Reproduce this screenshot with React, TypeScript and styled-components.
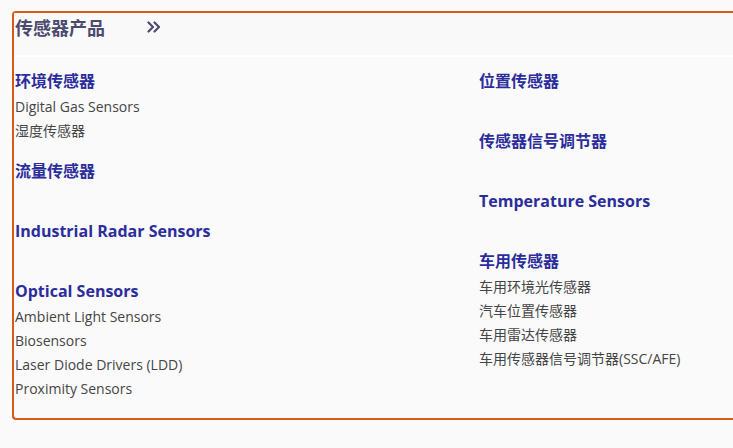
import React from "react";
import styled, { createGlobalStyle } from "styled-components";

const Global = createGlobalStyle`
  html, body { margin: 0; padding: 0; background: #fafafa; overflow: hidden; }
  body { font-family: "Open Sans", "Noto Sans CJK SC", sans-serif; }
  ul { margin: 0; padding: 0; list-style: none; }
`;

const Page = styled.div`
  padding: 11px 0 0 12px;
  width: 733px;
  box-sizing: border-box;
`;

const Panel = styled.section`
  border: 2px solid #d9581f;
  border-right: none;
  border-radius: 4px 0 0 4px;
  background: #fafafa;
`;

const Header = styled.header`
  display: flex;
  align-items: center;
  height: 44px;
  padding: 0 0 14px 1px;
  box-sizing: border-box;
  background: #f9f9f9;
  border-bottom: 2px solid #ffffff;
`;

const HeaderTitle = styled.h2`
  margin: 0;
  font-family: "Noto Sans CJK SC", sans-serif;
  font-size: 18px;
  font-weight: 700;
  line-height: 30px;
  color: #4c4a6e;
`;

const Chevron = styled.span`
  display: inline-flex;
  margin-left: 42px;
  color: #4c4a6e;
`;

const Columns = styled.div`
  display: grid;
  grid-template-columns: 464px 1fr;
  padding: 10px 0 3px 1px;
`;

const Column = styled.div`
  display: flex;
  flex-direction: column;
`;

const Group = styled.div`
  margin-bottom: 14px;
`;

const GroupTitle = styled.a`
  display: block;
  font-size: 16px;
  font-weight: 700;
  line-height: 28px;
  color: #2c2d9c;
  text-decoration: none;
  white-space: nowrap;
`;

const SubList = styled.ul`
  min-height: 18px;
`;

const SubItem = styled.li`
  font-size: 14px;
  line-height: 24px;
  color: #454545;
  white-space: nowrap;
`;

type G = { title: string; items: string[] };

const left: G[] = [
  { title: "环境传感器", items: ["Digital Gas Sensors", "湿度传感器"] },
  { title: "流量传感器", items: [] },
  { title: "Industrial Radar Sensors", items: [] },
  {
    title: "Optical Sensors",
    items: ["Ambient Light Sensors", "Biosensors", "Laser Diode Drivers (LDD)", "Proximity Sensors"],
  },
];

const right: G[] = [
  { title: "位置传感器", items: [] },
  { title: "传感器信号调节器", items: [] },
  { title: "Temperature Sensors", items: [] },
  {
    title: "车用传感器",
    items: ["车用环境光传感器", "汽车位置传感器", "车用雷达传感器", "车用传感器信号调节器(SSC/AFE)"],
  },
];

const ChevronsIcon = () => (
  <svg width="14" height="12" viewBox="0 0 14 12" fill="none" stroke="currentColor" strokeWidth="2.2" strokeLinecap="round" strokeLinejoin="round">
    <polyline points="1.5,1.5 6,6 1.5,10.5" />
    <polyline points="7.5,1.5 12,6 7.5,10.5" />
  </svg>
);

const renderCol = (groups: G[]) => (
  <Column>
    {groups.map((g) => (
      <Group key={g.title}>
        <GroupTitle href="#">{g.title}</GroupTitle>
        <SubList>
          {g.items.map((i) => (
            <SubItem key={i}>{i}</SubItem>
          ))}
        </SubList>
      </Group>
    ))}
  </Column>
);

export default function App() {
  return (
    <>
      <Global />
      <Page>
        <Panel>
          <Header>
            <HeaderTitle>传感器产品</HeaderTitle>
            <Chevron>
              <ChevronsIcon />
            </Chevron>
          </Header>
          <Columns>
            {renderCol(left)}
            {renderCol(right)}
          </Columns>
        </Panel>
      </Page>
    </>
  );
}
